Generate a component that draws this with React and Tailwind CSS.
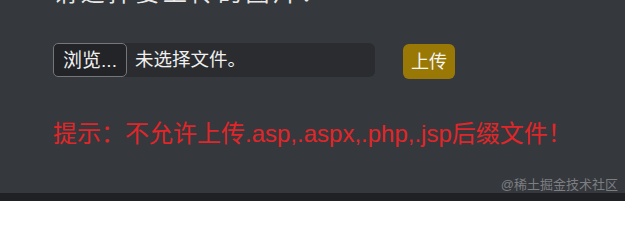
import React from "react";

const font = { fontFamily: '"Liberation Sans", "Noto Sans CJK SC", sans-serif' };

export default function App() {
  return (
    <div
      className="relative w-full h-[201px] overflow-hidden bg-[#35383c] flex flex-col"
      style={font}
    >
      <div className="flex-1 px-[53px]">
        {/* title, scrolled mostly out of view */}
        <h2 className="mt-[-19px] text-[24px] leading-[24px] tracking-[3.5px] text-[#e8e8e8] font-normal">
          请选择要上传的图片：
        </h2>

        {/* file row */}
        <div className="mt-[38px] flex items-start">
          <div className="flex items-center w-[322px] h-[34px] rounded-[6px] bg-[#2a2c2f]">
            <button className="h-[34px] w-[74px] rounded-[5px] border border-[#74767a] bg-[#232428] text-[19px] text-[#f0f0f0] leading-none">
              浏览...
            </button>
            <span className="ml-[8px] text-[18.5px] text-[#f0f0f0] leading-none">未选择文件。</span>
          </div>
          <button className="ml-[28px] mt-[1px] h-[35px] w-[52px] rounded-[6px] bg-[#9a7806] text-[18px] text-[#f5f5f5] leading-none">
            上传
          </button>
        </div>

        {/* warning */}
        <p className="mt-[42px] text-[24px] leading-[26px] text-[#e1262a]">
          提示：不允许上传.asp,.aspx,.php,.jsp后缀文件！
        </p>
      </div>

      <div className="h-[8px] bg-[#202124]" />

      <span className="absolute right-[7px] bottom-[9px] text-[13px] leading-[15px] text-[#7c7e82]">
        @稀土掘金技术社区
      </span>
    </div>
  );
}
